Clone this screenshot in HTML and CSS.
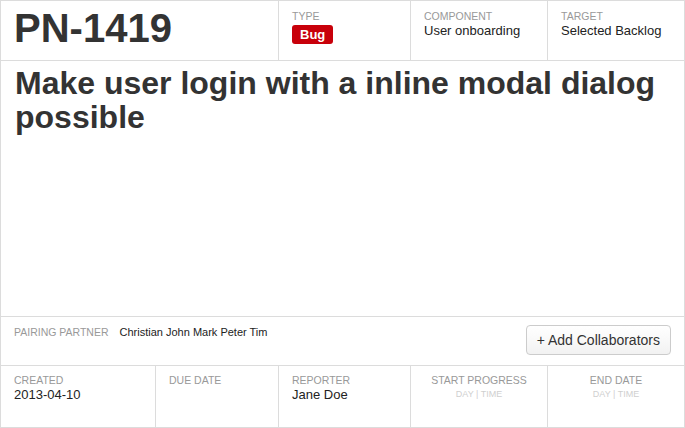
FILE: index.html
```html
<!DOCTYPE html>
<html>
<head>
<meta charset="utf-8">
<link rel="stylesheet" href="styles.css">
</head>
<body>
<div class="card">
  <div class="header">
    <div class="cell cell-id"><div class="issue-id">PN-1419</div></div>
    <div class="cell cell-type">
      <div class="label">Type</div>
      <span class="badge">Bug</span>
    </div>
    <div class="cell cell-component">
      <div class="label">Component</div>
      <div class="value">User onboarding</div>
    </div>
    <div class="cell cell-target">
      <div class="label">Target</div>
      <div class="value">Selected Backlog</div>
    </div>
  </div>
  <div class="title-area">
    <h1 class="title">Make user login with a inline modal dialog possible</h1>
  </div>
  <div class="pairing">
    <div class="pairing-text">
      <span class="label">Pairing Partner</span>
      <span class="names">Christian John Mark Peter Tim</span>
    </div>
    <button class="btn">+ Add Collaborators</button>
  </div>
  <div class="footer">
    <div class="cell f-created">
      <div class="label">Created</div>
      <div class="value">2013-04-10</div>
    </div>
    <div class="cell f-due">
      <div class="label">Due Date</div>
    </div>
    <div class="cell f-reporter">
      <div class="label">Reporter</div>
      <div class="value">Jane Doe</div>
    </div>
    <div class="cell f-start centered">
      <div class="label">Start Progress</div>
      <div class="hint">DAY | TIME</div>
    </div>
    <div class="cell f-end centered">
      <div class="label">End Date</div>
      <div class="hint">DAY | TIME</div>
    </div>
  </div>
</div>
</body>
</html>
```

FILE: styles.css
```css
* { box-sizing: border-box; }
html, body { margin: 0; padding: 0; background: #fff; }
body {
  font-family: "Liberation Sans", Arial, Helvetica, sans-serif;
  color: #222;
}
.card {
  width: 685px;
  height: 428px;
  border: 1px solid #dcdcdc;
  display: flex;
  flex-direction: column;
}
.header {
  height: 60px;
  flex: none;
  display: flex;
  border-bottom: 1px solid #dcdcdc;
}
.cell {
  border-right: 1px solid #dcdcdc;
  padding: 9px 13px 0 13px;
}
.cell:last-child { border-right: none; }
.cell-id { width: 278px; padding: 7px 13px 0 13px; }
.cell-type { width: 132px; }
.cell-component { width: 137px; }
.cell-target { flex: 1; }
.issue-id {
  font-size: 40px;
  line-height: 40px;
  font-weight: bold;
  color: #333;
}
.label {
  font-size: 10.5px;
  line-height: 13px;
  color: #999;
  text-transform: uppercase;
}
.value {
  font-size: 13px;
  line-height: 16px;
  color: #222;
}
.badge {
  display: inline-block;
  margin-top: 2px;
  background: #c8000a;
  color: #fff;
  font-weight: bold;
  font-size: 13px;
  line-height: 19px;
  height: 19px;
  padding: 0 8px;
  border-radius: 3px;
}
.title-area {
  flex: 1;
  padding: 5px 14px 0 14px;
}
.title {
  margin: 0;
  font-size: 32px;
  line-height: 34px;
  font-weight: bold;
  color: #333;
}
.pairing {
  height: 49px;
  flex: none;
  border-top: 1px solid #dcdcdc;
  display: flex;
  align-items: flex-start;
  padding: 8px 13px 0 13px;
}
.pairing-text {
  padding-top: 1px;
  display: flex;
  align-items: baseline;
  gap: 11px;
}
.names {
  font-size: 11px;
  color: #222;
}
.btn {
  margin-left: auto;
  height: 30px;
  padding: 0 10px;
  font-family: inherit;
  font-size: 14px;
  color: #333;
  background: linear-gradient(#ffffff, #f2f2f2);
  border: 1px solid #cccccc;
  border-radius: 4px;
}
.footer {
  height: 62px;
  flex: none;
  display: flex;
  border-top: 1px solid #dcdcdc;
}
.footer .cell { padding-top: 8px; }
.f-created { width: 155px; }
.f-due { width: 123px; }
.f-reporter { width: 132px; }
.f-start { width: 137px; }
.f-end { flex: 1; }
.centered { text-align: center; }
.hint {
  font-size: 9px;
  line-height: 14px;
  color: #cfcfcf;
}
```
